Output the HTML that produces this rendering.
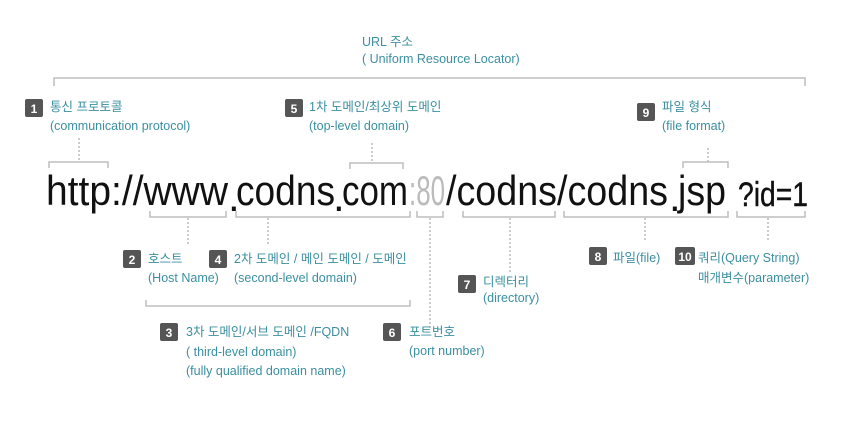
<!DOCTYPE html>
<html><head><meta charset="utf-8"><style>
html,body{margin:0;padding:0;background:#fff;}
svg{display:block}
.l{font-family:"Liberation Sans","Noto Sans CJK KR",sans-serif;font-size:12.5px;fill:#3b8fa0;}
.n{font-family:"Liberation Sans",sans-serif;font-size:12px;font-weight:bold;fill:#fff;text-anchor:middle}
.u{font-family:"Liberation Sans",sans-serif;font-size:42px;fill:#111;}
.b{stroke:#bdbdbd;stroke-width:1.5;fill:none}
.d{stroke:#999;stroke-width:1;stroke-dasharray:2,2;fill:none}
</style></head><body>
<svg width="846" height="426" viewBox="0 0 846 426" xmlns="http://www.w3.org/2000/svg">
<text class="l" x="362" y="46">URL 주소</text>
<text class="l" x="362" y="63">( Uniform Resource Locator)</text>
<path class="b" d="M54 86V78H805V86"/>

<rect x="25" y="99" width="18" height="18" rx="2" fill="#555"/><text class="n" x="34" y="113">1</text>
<text class="l" x="50" y="111">통신 프로토콜</text>
<text class="l" x="50" y="130">(communication protocol)</text>
<rect x="285" y="99" width="18" height="18" rx="2" fill="#555"/><text class="n" x="294" y="113">5</text>
<text class="l" x="309" y="111">1차 도메인/최상위 도메인</text>
<text class="l" x="309" y="130">(top-level domain)</text>
<rect x="637" y="103" width="18" height="18" rx="2" fill="#555"/><text class="n" x="646" y="117">9</text>
<text class="l" x="662" y="111">파일 형식</text>
<text class="l" x="662" y="130">(file format)</text>

<path class="d" d="M79 138V162M372 143V163M708 148V162"/>
<path class="b" d="M49 168V162H108V168M350 169V163H403V169M683 168V162H728V168"/>

<text class="u" x="46" y="205" textLength="182" lengthAdjust="spacingAndGlyphs">http://www</text>
<text class="u" x="228" y="211">.</text>
<text class="u" x="236" y="205" textLength="99" lengthAdjust="spacingAndGlyphs">codns</text>
<text class="u" x="333" y="211">.</text>
<text class="u" x="342" y="205" textLength="66" lengthAdjust="spacingAndGlyphs">com</text>
<text class="u" x="409" y="205" textLength="36" lengthAdjust="spacingAndGlyphs" style="fill:#bbb">:80</text>
<text class="u" x="446" y="205" textLength="222" lengthAdjust="spacingAndGlyphs">/codns/codns</text>
<text class="u" x="669" y="211">.</text>
<text class="u" x="678" y="205" textLength="48" lengthAdjust="spacingAndGlyphs">jsp</text>
<text class="u" x="738" y="206" textLength="70" lengthAdjust="spacingAndGlyphs" style="font-size:34px;stroke:#111;stroke-width:0.4">?id=1</text>

<path class="b" d="M150 211V217H226V211M236 211V217H410V211M417 211V217H443V211M463 211V217H555V211M564 211V217H728V211M737 211V217H805V211"/>
<path class="d" d="M188 218V246M268 218V246M430 218V330M510 218V272M645 218V242M768 218V242"/>

<rect x="123" y="250" width="18" height="18" rx="2" fill="#555"/><text class="n" x="132" y="264">2</text>
<text class="l" x="148" y="263">호스트</text>
<text class="l" x="148" y="282">(Host Name)</text>
<rect x="209" y="250" width="18" height="18" rx="2" fill="#555"/><text class="n" x="218" y="264">4</text>
<text class="l" x="234" y="263">2차 도메인 / 메인 도메인 / 도메인</text>
<text class="l" x="234" y="282">(second-level domain)</text>
<rect x="458" y="275" width="18" height="18" rx="2" fill="#555"/><text class="n" x="467" y="289">7</text>
<text class="l" x="483" y="286">디렉터리</text>
<text class="l" x="483" y="302">(directory)</text>
<rect x="589" y="247" width="18" height="18" rx="2" fill="#555"/><text class="n" x="598" y="261">8</text>
<text class="l" x="613" y="262">파일(file)</text>
<rect x="675" y="247" width="20" height="18" rx="2" fill="#555"/><text class="n" x="685" y="261">10</text>
<text class="l" x="698" y="262">쿼리(Query String)</text>
<text class="l" x="698" y="282">매개변수(parameter)</text>

<path class="b" d="M146 300V306H410V300"/>
<rect x="160" y="323" width="18" height="18" rx="2" fill="#555"/><text class="n" x="169" y="337">3</text>
<text class="l" x="186" y="336">3차 도메인/서브 도메인 /FQDN</text>
<text class="l" x="186" y="356">( third-level domain)</text>
<text class="l" x="186" y="375">(fully qualified domain name)</text>
<rect x="383" y="323" width="18" height="18" rx="2" fill="#555"/><text class="n" x="392" y="337">6</text>
<text class="l" x="409" y="336">포트번호</text>
<text class="l" x="409" y="355">(port number)</text>
</svg>
</body></html>
